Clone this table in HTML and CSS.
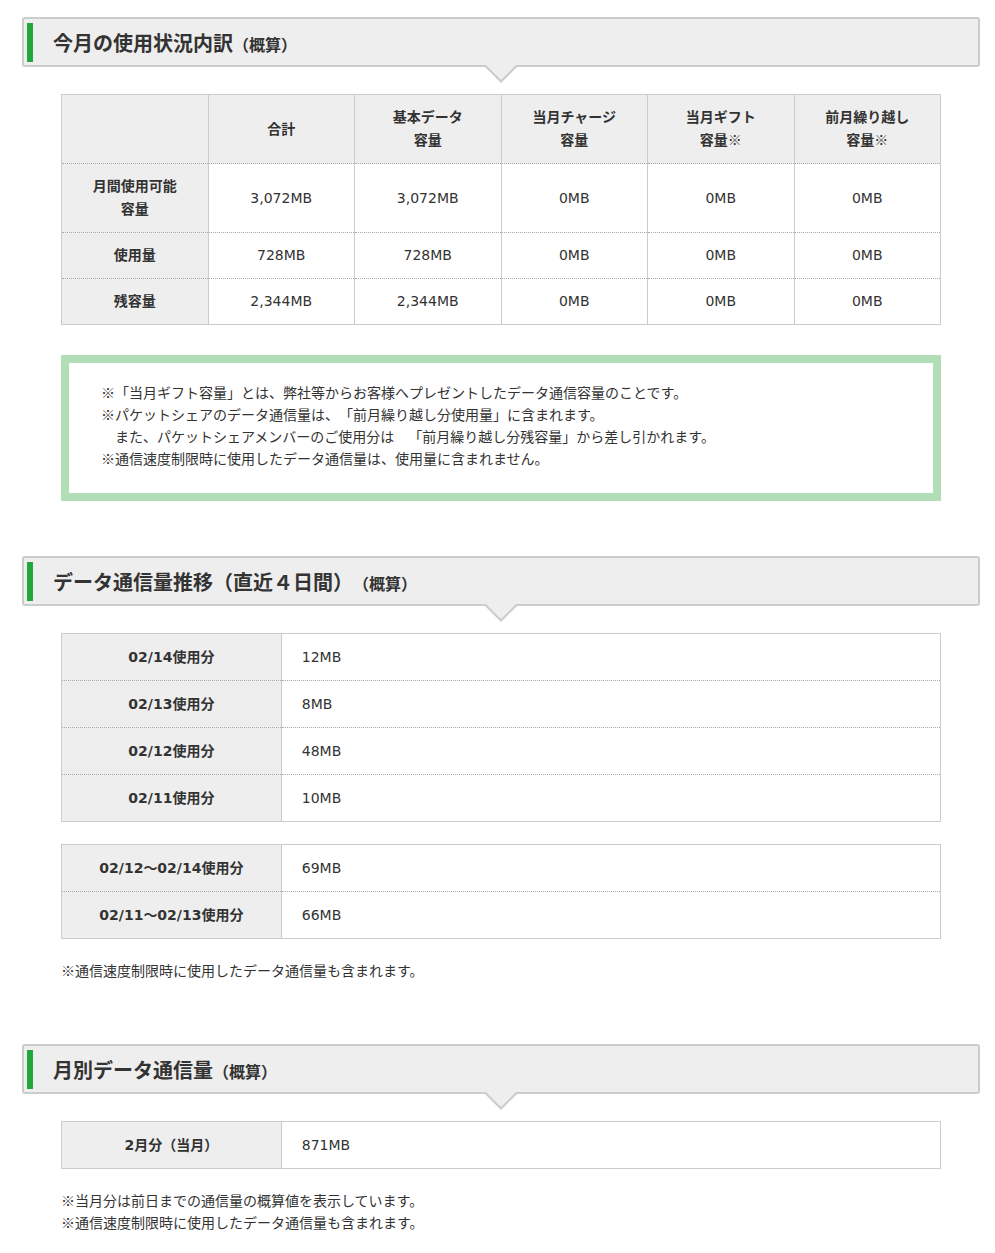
FILE: index.html
```html
<!DOCTYPE html>
<html lang="ja">
<head>
<meta charset="utf-8">
<title>データ使用状況</title>
<link rel="stylesheet" href="styles.css">
</head>
<body>
<div class="page">

  <section class="section section--first">
    <h2 class="sec-title"><span class="sec-title__bar">今月の使用状況内訳<small>（概算）</small></span></h2>
    <table class="grid grid--usage">
      <thead>
        <tr>
          <th class="corner"></th>
          <th>合計</th>
          <th>基本データ<br>容量</th>
          <th>当月チャージ<br>容量</th>
          <th>当月ギフト<br>容量<span class="kome">※</span></th>
          <th>前月繰り越し<br>容量<span class="kome">※</span></th>
        </tr>
      </thead>
      <tbody>
        <tr>
          <th>月間使用可能<br>容量</th>
          <td>3,072MB</td>
          <td>3,072MB</td>
          <td>0MB</td>
          <td>0MB</td>
          <td>0MB</td>
        </tr>
        <tr>
          <th>使用量</th>
          <td>728MB</td>
          <td>728MB</td>
          <td>0MB</td>
          <td>0MB</td>
          <td>0MB</td>
        </tr>
        <tr>
          <th>残容量</th>
          <td>2,344MB</td>
          <td>2,344MB</td>
          <td>0MB</td>
          <td>0MB</td>
          <td>0MB</td>
        </tr>
      </tbody>
    </table>
    <div class="notice">
      <span class="kome">※</span>「当月ギフト容量」とは、弊社等からお客様へプレゼントしたデータ通信容量のことです。<br>
      <span class="kome">※</span>パケットシェアのデータ通信量は、「前月繰り越し分使用量」に含まれます。<br>
      　また、パケットシェアメンバーのご使用分は　「前月繰り越し分残容量」から差し引かれます。<br>
      <span class="kome">※</span>通信速度制限時に使用したデータ通信量は、使用量に含まれません。
    </div>
  </section>

  <section class="section section--second">
    <h2 class="sec-title"><span class="sec-title__bar">データ通信量推移（直近４日間）<small>（概算）</small></span></h2>
    <table class="grid grid--list">
      <tbody>
        <tr><th>02/14使用分</th><td>12MB</td></tr>
        <tr><th>02/13使用分</th><td>8MB</td></tr>
        <tr><th>02/12使用分</th><td>48MB</td></tr>
        <tr><th>02/11使用分</th><td>10MB</td></tr>
      </tbody>
    </table>
    <table class="grid grid--list grid--follow">
      <tbody>
        <tr><th>02/12～02/14使用分</th><td>69MB</td></tr>
        <tr><th>02/11～02/13使用分</th><td>66MB</td></tr>
      </tbody>
    </table>
    <p class="note"><span class="kome">※</span>通信速度制限時に使用したデータ通信量も含まれます。</p>
  </section>

  <section class="section section--third">
    <h2 class="sec-title"><span class="sec-title__bar">月別データ通信量<small>（概算）</small></span></h2>
    <table class="grid grid--list">
      <tbody>
        <tr><th>2月分（当月）</th><td>871MB</td></tr>
      </tbody>
    </table>
    <p class="note"><span class="kome">※</span>当月分は前日までの通信量の概算値を表示しています。<br><span class="kome">※</span>通信速度制限時に使用したデータ通信量も含まれます。</p>
  </section>

</div>
</body>
</html>
```

FILE: styles.css
```css
* {
  box-sizing: border-box;
}

body {
  margin: 0;
  background: #fff;
  color: #333;
  font-family: "DejaVu Sans", "Noto Sans CJK JP", sans-serif;
  font-size: 14px;
  text-spacing-trim: space-all;
}

.kome {
  font-family: "Noto Sans CJK JP", sans-serif;
  line-height: 1;
}

.page {
  width: 958px;
  margin-left: 22px;
  padding-top: 17px;
  padding-bottom: 20px;
}

.section--second {
  margin-top: 55px;
}

.section--third {
  margin-top: 62px;
}

/* section title */
.sec-title {
  position: relative;
  margin: 0;
  background: #eee;
  border: 2px solid #ccc;
  border-radius: 3px;
  padding: 4px 3px 3px;
  font-size: 20px;
  font-weight: bold;
  color: #333;
}

.sec-title__bar {
  display: block;
  height: 39px;
  padding-top: 3px;
  line-height: 36px;
  border-left: 6px solid #21a83a;
  padding-left: 20px;
}

.sec-title small {
  font-size: 16px;
}

.sec-title::before {
  content: "";
  position: absolute;
  left: 50%;
  top: calc(100% + 2px);
  margin-left: -16px;
  border-style: solid;
  border-width: 16px 16px 0;
  border-color: #ccc transparent transparent;
}

.sec-title::after {
  content: "";
  position: absolute;
  left: 50%;
  top: 100%;
  margin-left: -15px;
  border-style: solid;
  border-width: 15px 15px 0;
  border-color: #eee transparent transparent;
}

/* tables */
.grid {
  width: 880px;
  margin: 27px auto 0;
  border-collapse: collapse;
  table-layout: fixed;
  border: 1px solid #ccc;
}

.grid th,
.grid td {
  border-left: 1px solid #ccc;
  border-right: 1px solid #ccc;
  border-top: 1px dotted #aaa;
  border-bottom: 1px dotted #aaa;
  padding: 11px 10px;
  font-size: 14px;
  color: #333;
}

.grid th {
  background: #eee;
  font-weight: bold;
}

.grid--usage th,
.grid--usage td {
  line-height: 23px;
  text-align: center;
}

.grid--list th,
.grid--list td {
  line-height: 24px;
}

.grid--list th {
  width: 25%;
  text-align: center;
}

.grid--list td {
  text-align: left;
  padding-left: 20px;
}

.grid--follow {
  margin-top: 22px;
}

/* notice box */
.notice {
  width: 880px;
  margin: 30px auto 0;
  border: 8px solid #b1deb6;
  padding: 19px 30px 23px 32px;
  line-height: 22px;
  font-size: 14px;
}

.note {
  width: 880px;
  margin: 21px auto 0;
  line-height: 22px;
  font-size: 14px;
}
```
